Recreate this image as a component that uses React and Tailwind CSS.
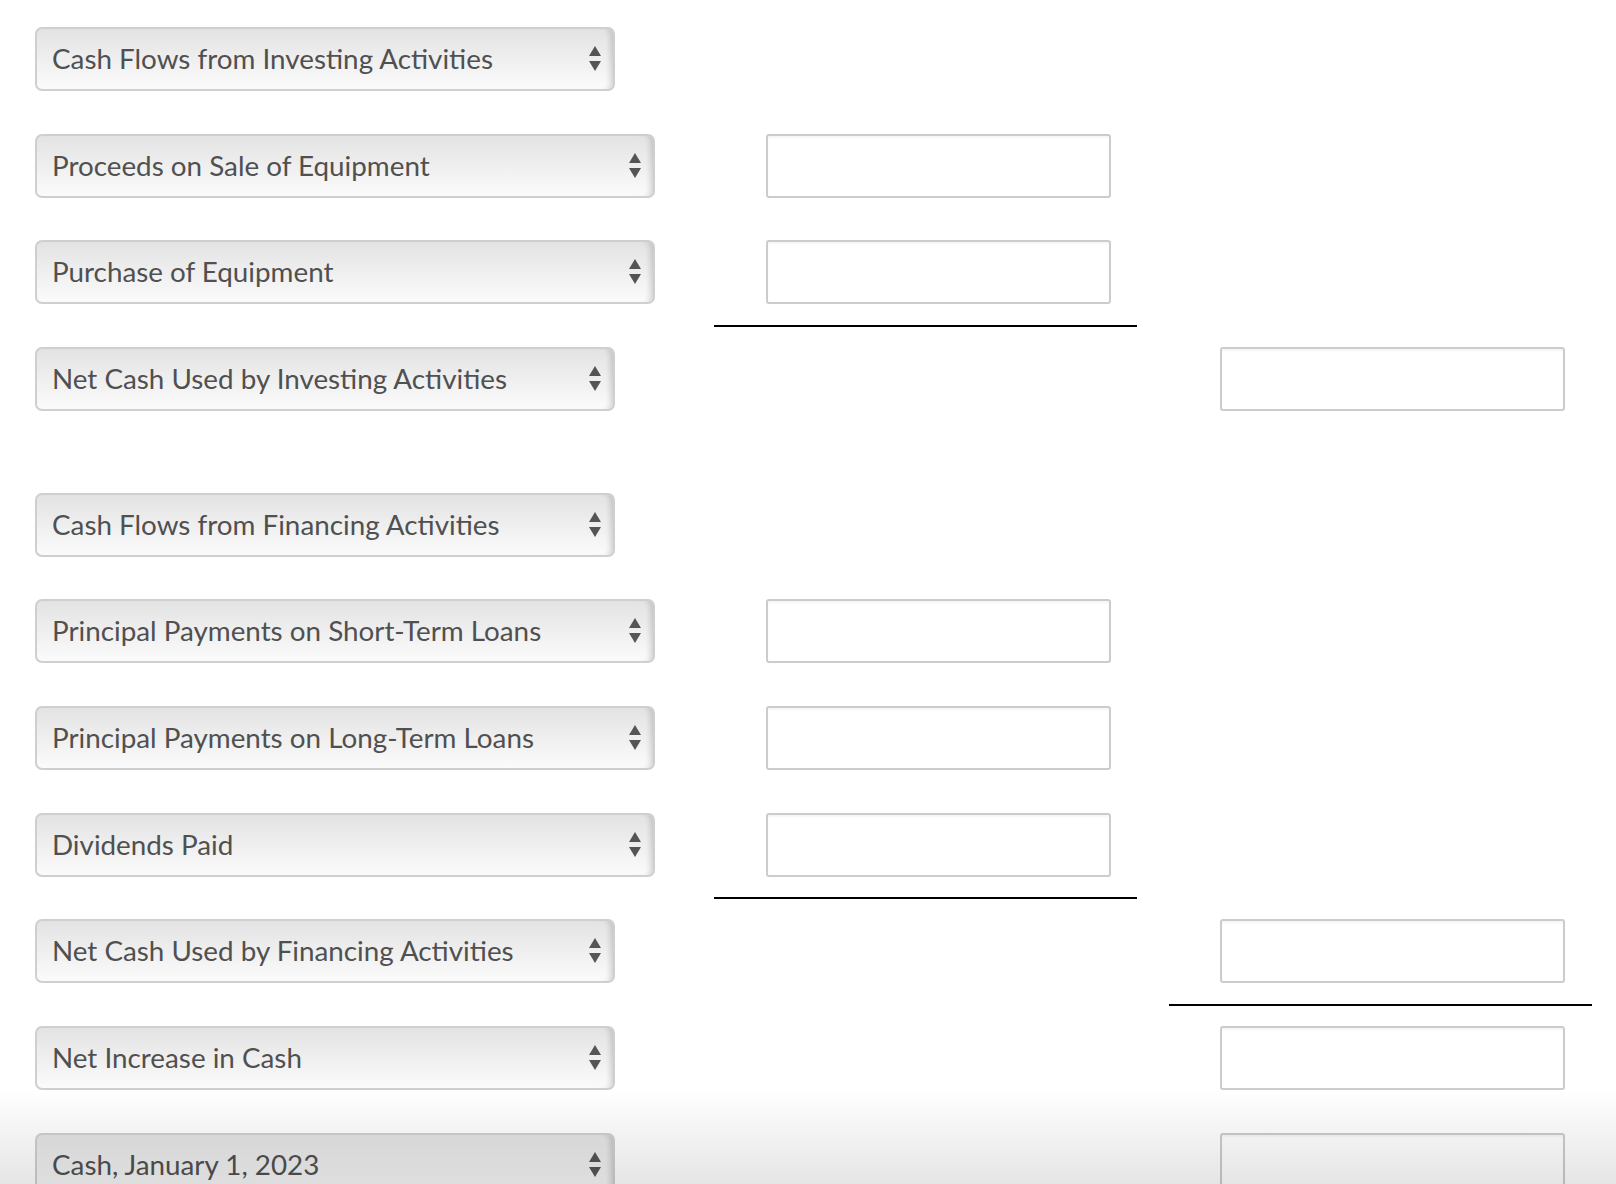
import React from 'react'

function Arrows() {
  return (
    <svg width="12" height="26" viewBox="0 0 12 26" className="shrink-0">
      <polygon points="6,0 12,10 0,10" fill="#555555" />
      <polygon points="0,15 12,15 6,25" fill="#555555" />
    </svg>
  )
}

function Select({ label, wide }) {
  return (
    <div
      className={`flex h-[64px] items-center justify-between rounded-[7px] border-2 border-[#cfcfcf] bg-gradient-to-b from-[#e3e3e3] to-[#fbfbfb] pl-[15px] pr-[12px] shadow-[inset_-7px_0_6px_-5px_rgba(0,0,0,0.18)] ${wide ? 'w-[620px]' : 'w-[580px]'}`}
    >
      <span className="text-[27.8px] leading-none text-[#505050]">{label}</span>
      <Arrows />
    </div>
  )
}

function Input() {
  return (
    <div className="h-[64px] w-[345px] rounded-[3px] border-2 border-[#cccccc] bg-white shadow-[inset_0_2px_2px_rgba(0,0,0,0.04)]"></div>
  )
}

function Row({ label, wide, col }) {
  return (
    <div className="flex h-[64px] items-start">
      <div className="w-[731px] shrink-0">
        <Select label={label} wide={wide} />
      </div>
      <div className="w-[454px] shrink-0">{col === 1 && <Input />}</div>
      <div>{col === 2 && <Input />}</div>
    </div>
  )
}

function Spacer({ line }) {
  return (
    <div className="flex h-[42.7px] items-center">
      {line === 1 && <div className="ml-[679px] h-[2px] w-[423px] bg-black"></div>}
      {line === 2 && <div className="ml-[1134px] h-[2px] w-[423px] bg-black"></div>}
    </div>
  )
}

export default function App() {
  return (
    <div className="relative h-[1184px] overflow-hidden bg-white pl-[35px] pt-[27px] font-['Lato','Noto_Sans',sans-serif]">
      <Row label="Cash Flows from Investing Activities" />
      <Spacer />
      <Row label="Proceeds on Sale of Equipment" wide col={1} />
      <Spacer />
      <Row label="Purchase of Equipment" wide col={1} />
      <Spacer line={1} />
      <Row label="Net Cash Used by Investing Activities" col={2} />
      <div className="h-[81.5px]"></div>
      <Row label="Cash Flows from Financing Activities" />
      <Spacer />
      <Row label="Principal Payments on Short-Term Loans" wide col={1} />
      <Spacer />
      <Row label="Principal Payments on Long-Term Loans" wide col={1} />
      <Spacer />
      <Row label="Dividends Paid" wide col={1} />
      <Spacer line={1} />
      <Row label="Net Cash Used by Financing Activities" col={2} />
      <Spacer line={2} />
      <Row label="Net Increase in Cash" col={2} />
      <Spacer />
      <Row label="Cash, January 1, 2023" col={2} />
      <div className="pointer-events-none absolute inset-x-0 bottom-0 h-[96px] bg-gradient-to-b from-[rgba(0,0,0,0)] to-[rgba(0,0,0,0.1)]"></div>
    </div>
  )
}
